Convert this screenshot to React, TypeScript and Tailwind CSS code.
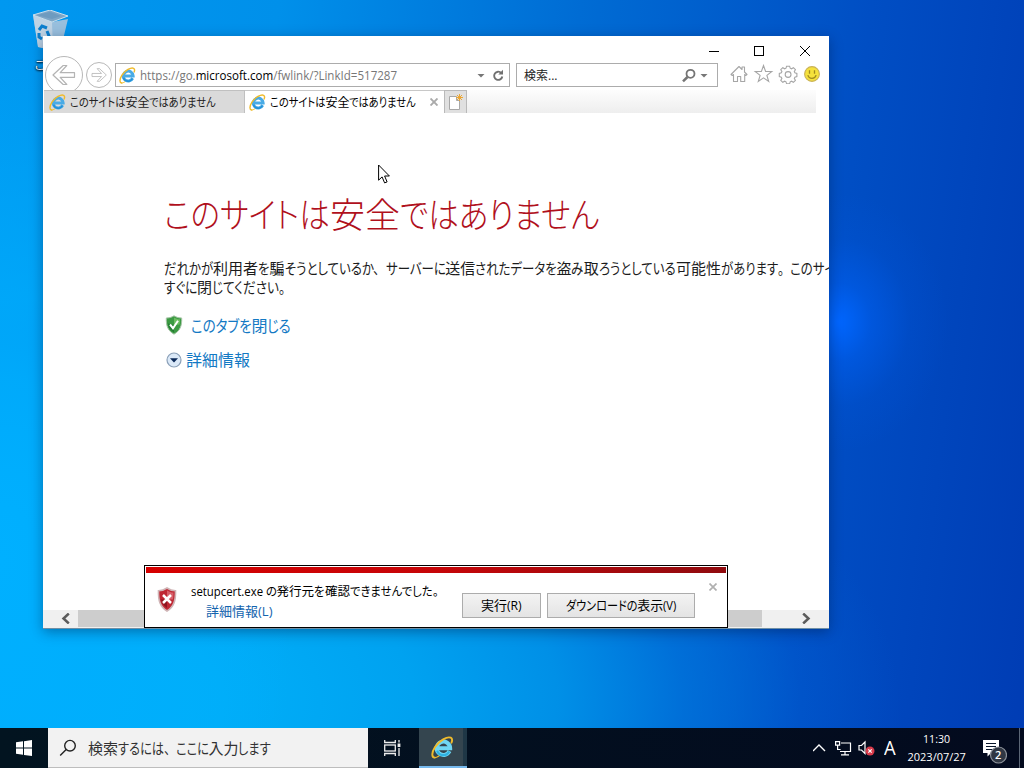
import { useLayoutEffect, useRef, type ReactNode } from "react";

/** Squeezes a whole line to the given width. */
function FitLine({ width, className = "", children }: { width: number; className?: string; children: ReactNode }) {
  const inner = useRef<HTMLSpanElement>(null);
  useLayoutEffect(() => {
    const el = inner.current;
    if (el) el.style.transform = `scaleX(${width / el.offsetWidth})`;
  }, [width]);
  return (
    <span className={`inline-block whitespace-nowrap ${className}`} style={{ width }}>
      <span ref={inner} className="inline-block origin-left">
        {children}
      </span>
    </span>
  );
}

/** UI Japanese: full-width kanji with condensed kana, set to a total width. */
function JpLine({ text, width, className = "" }: { text: string; width: number; className?: string }) {
  const root = useRef<HTMLSpanElement>(null);
  const runs = text.match(/[\u4e00-\u9fff]+|[、。]|[^\u4e00-\u9fff、。]+/g) ?? [];
  useLayoutEffect(() => {
    if (!root.current) return;
    const items = Array.from(root.current.children) as HTMLElement[];
    let kanji = 0;
    let kana = 0;
    const widths = items.map((o) => {
      const w = (o.firstElementChild as HTMLElement).offsetWidth;
      if (o.dataset.kana) kana += w;
      else kanji += w;
      return w;
    });
    if (!kana) return;
    const s = (width - kanji) / kana;
    items.forEach((o, i) => {
      if (!o.dataset.kana) return;
      o.style.width = `${widths[i] * s}px`;
      (o.firstElementChild as HTMLElement).style.transform = `scaleX(${s})`;
    });
  }, [text, width]);
  return (
    <span ref={root} className={`inline-flex whitespace-pre ${className}`}>
      {runs.map((r, i) => {
        const kana = !/[\u4e00-\u9fff]/.test(r);
        const stop = /[、。]/.test(r);
        return (
          <span key={i} data-kana={kana ? "1" : undefined} className="inline-block">
            <span className={kana && !stop ? "inline-block origin-left [font-feature-settings:'palt']" : "inline-block origin-left"}>{r}</span>
          </span>
        );
      })}
    </span>
  );
}

function IeLogo({ size, glow = false }: { size: number; glow?: boolean }) {
  return (
    <svg width={size} height={size} viewBox="0 0 24 24" fill="none" className="shrink-0">
      <path d="M19.300 15.900a7 7 0 1 1 .7-3.200H7" stroke={glow ? "#6fd6f2" : "#49abe6"} strokeWidth="4.200" />
      <path d="M19 16.200a6.800 6.800 0 0 1-12.600-1" stroke={glow ? "#2fb2e2" : "#2390d8"} strokeWidth="2.200" />
      <path
        d="M3.800 22.600C.600 22.200.400 17.500 4.200 11.500 8.600 4.600 17 .200 20.600 1.800c1.600.800 1.700 2.900.800 5.200"
        stroke="#efbb2c"
        strokeWidth="2"
        strokeLinecap="round"
      />
      <path d="M3.800 22.600c1.400.100 2.800-.600 4.400-1.700" stroke="#efbb2c" strokeWidth="1.400" strokeLinecap="round" />
    </svg>
  );
}

function RecycleBin() {
  return (
    <svg width="40" height="46" viewBox="0 0 40 46" className="block">
      <path d="M2 5 7 37l22 5 8-33-16 3z" fill="#a9c3da" opacity=".9" />
      <path d="M2 5 7 37l15 3-1-28z" fill="#c4d6e5" opacity=".85" />
      <path d="M2 5 19 0l18 6-16 6z" fill="#7fa6c6" stroke="#c9dfec" strokeWidth="1" />
      <path d="m6 5 13-3 11 4-9 3z" fill="#6e9bbf" />
      <g stroke="#0c7fce" strokeWidth="3" fill="none">
        <path d="m8 20 3-4 5 2" />
        <path d="m16 21 2 5-3 3" />
        <path d="m11 29-3-2v-4" />
      </g>
    </svg>
  );
}

function Arrow({ size, flip = false }: { size: number; flip?: boolean }) {
  return (
    <svg width={size} height={size} viewBox="0 0 24 24" className={flip ? "-scale-x-100" : ""}>
      <path
        d="M1 12 11.200 2.500h3.600L8.200 9.700h14.300v4.600H8.200l6.600 7.200h-3.600z"
        fill="#fff"
        stroke="#b4b4b4"
        strokeWidth="1.200"
        strokeLinejoin="round"
      />
    </svg>
  );
}

function TitleBar() {
  return (
    <div className="flex h-[27px] shrink-0 items-center justify-end pt-[3px] pr-[18px]">
      <svg width="102" height="12" viewBox="0 0 102 12" fill="none" stroke="#000" shapeRendering="crispEdges">
        <path d="M0 6.500h10" />
        <rect x="45.500" y="1.500" width="9" height="9" />
        <path d="m91 1 10 10M101 1 91 11" shapeRendering="auto" />
      </svg>
    </div>
  );
}

function NavRow() {
  return (
    <div className="flex h-[27px] shrink-0">
      <div className="flex w-[72px] items-center gap-[3px] pl-[2px]">
        <span className="-mt-[3px] flex size-[38px] shrink-0 items-center justify-center rounded-full border border-[#b8b8b8] bg-white">
          <Arrow size={24} />
        </span>
        <span className="-mt-[3px] flex size-[26px] shrink-0 items-center justify-center rounded-full border border-[#b8b8b8] bg-white">
          <Arrow size={16} flip />
        </span>
      </div>
      <div className="flex h-[24px] w-[395px] items-center border border-[#acacac] bg-white pl-[3px]">
        <IeLogo size={17} />
        <FitLine width={257} className="mt-[2px] ml-[4px] text-[12px] leading-none text-[#777]">
          https://go.<span className="text-black">microsoft.com</span>/fwlink/?LinkId=517287
        </FitLine>
        <svg width="34" height="16" viewBox="0 0 34 16" className="mt-[2px] ml-auto" fill="none">
          <path d="M2.500 6h7L6 9.500z" fill="#777" />
          <path d="M26.200 4.900A4.100 4.100 0 1 0 27.300 8.500" stroke="#707070" strokeWidth="1.900" />
          <path d="M28 1.800v4.700h-4.700z" fill="#707070" />
        </svg>
      </div>
      <div className="ml-[6px] flex h-[24px] w-[202px] items-center border border-[#acacac] bg-white pl-[7px]">
        <FitLine width={33} className="mt-[2px] text-[12px] leading-none text-[#222]">検索...</FitLine>
        <svg width="28" height="16" viewBox="0 0 28 16" className="mt-[2px] mr-[8px] ml-auto" fill="none">
          <circle cx="9.500" cy="5.800" r="4" stroke="#757575" strokeWidth="1.800" />
          <path d="M6.500 9 2 13.300" stroke="#757575" strokeWidth="2.500" />
          <path d="M19.500 6h7L23 9.500z" fill="#777" />
        </svg>
      </div>
      <div className="-mt-[2px] flex h-[26px] items-center pl-[12px]">
        <svg width="92" height="20" viewBox="0 0 92 20" fill="none" stroke="#a6a6a6" strokeWidth="1.100">
          <path d="M1 10.500 9 2.500l3 3V3h2.500v5L17 10.500l-1.300 1-1-1V17.500h-4v-5H7.500v5h-4v-7l-1.200 1z" strokeLinejoin="round" />
          <path d="m33.500 1.500 2.100 6h6.200l-4.900 3.900 1.800 6.100-5.200-3.600-5.200 3.600 1.800-6.100-4.900-3.900h6.200z" />
          <path d="m56.600 2.200 3 0 .6 2 1.300.600 1.900-1.100 2 2-1.100 1.900.600 1.300 2 .600v3l-2 .600-.600 1.300 1.100 1.900-2 2-1.900-1.100-1.300.600-.600 2h-3l-.600-2-1.300-.600-1.900 1.100-2-2 1.100-1.900-.600-1.300-2-.600v-3l2-.600.600-1.300-1.100-1.900 2-2 1.900 1.100 1.300-.600z" />
          <circle cx="58.100" cy="10.500" r="2.900" />
          <circle cx="82" cy="10" r="7.400" fill="#f5e13c" stroke="#c9b25a" />
          <path d="M79.500 6.300v3.400M84.500 6.300v3.400M77.900 11.200c1 4.200 7.200 4.200 8.200 0" stroke="#a08a20" strokeWidth="1.300" />
        </svg>
      </div>
    </div>
  );
}

function TabRow() {
  return (
    <div className="relative flex h-[23px] shrink-0">
      <div className="ml-px flex w-[201px] items-center border-t border-r border-[#c0c0c0] bg-[#dadada] pl-[5px]">
        <IeLogo size={17} />
        <JpLine text="このサイトは安全ではありません" width={146} className="mt-[2px] ml-[4px] text-[12px] leading-none text-[#222]" />
      </div>
      <div className="flex w-[199px] items-center border-t border-[#c8c8c8] bg-white pl-[4px]">
        <IeLogo size={17} />
        <JpLine text="このサイトは安全ではありません" width={146} className="mt-[2px] ml-[4px] text-[12px] leading-none text-black" />
        <svg width="8" height="8" viewBox="0 0 8 8" className="mr-[6px] ml-auto">
          <path d="m.500.500 7 7m0-7-7 7" stroke="#aaa" strokeWidth="1.900" />
        </svg>
      </div>
      <div className="flex w-[23px] items-center justify-center border border-b-0 border-[#b9b9b9] bg-[#e0e0e0]">
        <svg width="17" height="18" viewBox="0 0 17 18">
          <path d="M2.500 3.500h7v4h3v9h-10z" fill="#fff" stroke="#a8a8a8" />
          <path d="M12.500 1v7M9 4.500h7M10 2l5 5m0-5-5 5" stroke="#eda733" strokeWidth="1" />
        </svg>
      </div>
      <div className="mr-[13px] flex-1 bg-linear-to-b from-[#fdfdfd] to-[#eeeeee]" />
    </div>
  );
}

function Page() {
  return (
    <div className="flex flex-1 flex-col overflow-hidden pl-[121px]">
      <h1 className="mt-[81px] h-[42px] leading-[42px]">
        <JpLine text="このサイトは安全ではありません" width={435} className="text-[35px] leading-[42px] font-light text-[#b0101c]" />
      </h1>
      <p className="mt-[23px] flex flex-col text-[15px] leading-[19px] text-[#1c1c1c]">
        <JpLine
          text="だれかが利用者を騙そうとしているか、サーバーに送信されたデータを盗み取ろうとしている可能性があります。このサイ"
          width={672}
        />
        <JpLine text="すぐに閉じてください。" width={128} />
      </p>
      <div className="mt-[18px] flex h-[20px] items-center pl-[1px] text-[#1379c4]">
        <svg width="18" height="20" viewBox="0 0 18 20">
          <path d="M9 .800c2.500 1.600 5 2.200 7.700 2.200.2 7.500-1.200 12.500-7.700 16.200C2.500 15.500 1.100 10.500 1.300 3 4 3 6.500 2.400 9 .800z" fill="#3c9a43" stroke="#a9c5a9" strokeWidth="1" />
          <path d="M9 2.500c2 1.200 4 1.700 6 1.800 0 2-.1 3.700-.500 5.200L9 10z" fill="#6cbd62" />
          <path d="M9 10v7.500C5 15 3.300 12.500 3 8.500z" fill="#237c32" />
          <path d="m5 9.500 3 3.700 5-7.400" fill="none" stroke="#fff" strokeWidth="2" />
        </svg>
        <JpLine text="このタブを閉じる" width={100} className="mt-[2px] ml-[8px] text-[16px] leading-[20px]" />
      </div>
      <div className="mt-[15px] flex h-[20px] items-center pl-[2px] text-[#1379c4]">
        <svg width="16" height="16" viewBox="0 0 16 16">
          <circle cx="8" cy="8" r="7" fill="#dbe9f8" stroke="#8ba0b8" strokeWidth="1.200" />
          <path d="M4 6.300h8L8 10.500z" fill="#0b2858" />
        </svg>
        <span className="ml-[4px] text-[16px] leading-[20px]">詳細情報</span>
      </div>
    </div>
  );
}

function ScrollBar() {
  return (
    <div className="flex h-[18px] shrink-0 items-stretch bg-[#f0f0f0] pb-px">
      <div className="flex w-[35px] items-center justify-end pr-[8px]">
        <svg width="9" height="11" viewBox="0 0 9 11"><path d="M7.800.500 2.500 5.500l5.300 5" fill="none" stroke="#5c5c5c" strokeWidth="2.500" /></svg>
      </div>
      <div className="w-[684px] bg-[#cdcdcd]" />
      <div className="flex flex-1 items-center pl-[40px]">
        <svg width="9" height="11" viewBox="0 0 9 11"><path d="m1.200.500 5.300 5-5.300 5" fill="none" stroke="#5c5c5c" strokeWidth="2.500" /></svg>
      </div>
    </div>
  );
}

function DownloadBar() {
  return (
    <div className="absolute top-[529px] left-[101px] flex h-[63px] w-[584px] flex-col border border-black bg-white p-px">
      <div className="h-[6px] shrink-0 bg-linear-to-r from-[#d60000] via-[#c60508] to-[#900a0e]" />
      <div className="flex flex-1 items-start">
        <svg width="20" height="25" viewBox="0 0 20 25" className="mt-[14px] ml-[11px]">
          <path d="M10 1c2.700 1.900 5.400 2.700 8.500 2.700C18.800 13.500 17 19.500 10 24 3 19.500 1.200 13.500 1.500 3.700 4.600 3.700 7.300 2.900 10 1z" fill="#bf2834" stroke="#cfb4b6" strokeWidth="1.600" />
          <path d="M10 3.500c2 1.300 4.200 2 6.500 2.100 0 2.800-.1 4.700-.700 6.900H10z" fill="#d8606a" />
          <path d="M10 12.500V21c-3.800-2.800-5.300-5-6-8.500z" fill="#8d1520" />
          <path d="m6 8 8 8m0-8-8 8" stroke="#fff" strokeWidth="2.500" />
        </svg>
        <div className="mt-[9px] ml-[14px] flex w-[271px] flex-col">
          <JpLine text="setupcert.exe の発行元を確認できませんでした。" width={254} className="text-[12.500px] leading-[20px] text-black" />
          <JpLine text="詳細情報(L)" width={66} className="ml-[15px] text-[13px] leading-[19px] text-[#1464ae]" />
        </div>
        <button className="mt-[20px] flex h-[25px] w-[79px] items-center justify-center border border-[#acacac] bg-linear-to-b from-[#f3f3f3] to-[#e4e4e4] text-[13px] leading-none">
          <JpLine text="実行(R)" width={41} />
        </button>
        <button className="mt-[20px] ml-[6px] flex h-[25px] w-[148px] items-center justify-center border border-[#acacac] bg-linear-to-b from-[#f3f3f3] to-[#e4e4e4] text-[13px] leading-none">
          <JpLine text="ダウンロードの表示(V)" width={110} />
        </button>
        <svg width="8" height="8" viewBox="0 0 8 8" className="mt-[10px] ml-[14px]">
          <path d="m.500.500 7 7m0-7-7 7" stroke="#b0b0b0" strokeWidth="1.700" />
        </svg>
      </div>
    </div>
  );
}

function Taskbar() {
  return (
    <div className="flex h-[40px] shrink-0 bg-linear-to-r from-[#021420] to-[#030a1e] text-white">
      <div className="flex w-[48px] items-center justify-center">
        <svg width="16" height="16" viewBox="0 0 16 16" fill="#fff">
          <path d="M0 2.300 7 1.300v6.300H0zM8 1.200 16 0v7.600H8zM0 8.500h7v6.300l-7-1zM8 8.500h8V16l-8-1.100z" />
        </svg>
      </div>
      <div className="flex w-[320px] items-center border-b border-[#bdbdbd] bg-[#f2f2f2] pl-[11px]">
        <svg width="18" height="18" viewBox="0 0 18 18" fill="none" stroke="#222" strokeWidth="1.400">
          <circle cx="11" cy="6.700" r="5.300" />
          <path d="m7.200 10.600-6 6" />
        </svg>
        <JpLine text="検索するには、ここに入力します" width={183} className="mt-px ml-[11px] text-[15px] leading-none text-[#333]" />
      </div>
      <div className="flex w-[51px] items-center justify-center pr-[3px]">
        <svg width="17" height="16" viewBox="0 0 17 16" fill="none" stroke="#eee" strokeWidth="1.300">
          <path d="M.700 0v2.500h10.600V0M.700 16v-2.500h10.600V16" />
          <rect x=".700" y="5" width="10.600" height="6" />
          <path d="M15 0v2.500M15 8v8" />
          <path d="M15 3.500V7" strokeWidth="2.800" />
        </svg>
      </div>
      <div className="flex w-[48px] border-b-2 border-[#76b9ed]">
        <div className="flex flex-1 items-center justify-center bg-[#34454f] pl-[3px]"><IeLogo size={23} glow /></div>
        <div className="w-[4px] bg-[#1f3746]" />
      </div>
      <div className="ml-auto flex items-center">
        <svg width="66" height="18" viewBox="0 0 66 18" fill="none" stroke="#fff" strokeWidth="1.200">
          <path d="m0 12 6-6 6 6" strokeWidth="1.400" />
          <path d="M28 4h9.500v8.500H27M32 12.500v3M28 15.800h8" />
          <path d="M22.600 2.600h4v3.600h-4zM24.600 6.200v4.300h3" />
          <path d="M46 6.500h2.500L52 3v11.500L48.500 11H46z" />
          <circle cx="57" cy="12" r="4.500" fill="#d83b4b" stroke="none" />
          <path d="m55.300 10.300 3.400 3.400m0-3.400-3.400 3.400" strokeWidth="1.200" />
        </svg>
        <FitLine width={12} className="ml-[5px] text-[20px] leading-none font-medium">A</FitLine>
        <div className="ml-[11px] flex w-[59px] flex-col items-center text-[11px] leading-[18px]">
          <FitLine width={27}>11:30</FitLine>
          <FitLine width={58}>2023/07/27</FitLine>
        </div>
        <div className="relative ml-[17px] h-[40px] w-[36px]">
          <svg width="24" height="27" viewBox="0 0 24 27" className="mt-[11px]">
            <path d="M0 1h16v13H8l-3.500 3.500V14H0z" fill="#fff" />
            <path d="M3 4.500h10M3 7.500h10M3 10.500h7" stroke="#08152a" />
            <circle cx="15.500" cy="16" r="8" fill="#303743" stroke="#8b9098" strokeWidth="1.200" />
          </svg>
          <span className="absolute top-[20px] left-[12px] text-[11px] leading-[14px] font-semibold">2</span>
        </div>
        <div className="mr-[4px] h-[40px] w-px bg-[#5c6676]" />
      </div>
    </div>
  );
}

export default function App() {
  return (
    <div className="relative flex h-[768px] w-[1024px] flex-col overflow-hidden bg-[radial-gradient(ellipse_110px_130px_at_838px_322px,#0066ff_0%,rgba(0,98,248,0.500)_30%,rgba(0,92,235,0.150)_65%,rgba(0,90,230,0)_100%),radial-gradient(ellipse_300px_520px_at_0px_560px,#00b0ff_0%,rgba(0,174,253,0.900)_35%,rgba(0,162,246,0)_100%),radial-gradient(ellipse_900px_400px_at_0px_700px,#00b2fc_0%,#00aef8_25%,#00a2f0_46%,rgba(0,146,232,0.950)_62%,rgba(0,120,222,0.700)_76%,rgba(0,100,215,0.300)_89%,rgba(0,90,210,0)_100%),linear-gradient(97deg,#0098f0_0%,#0090ea_25%,#006cd4_52%,#004ec4_78%,#003cb4_100%)] font-['Open_Sans','Noto_Sans_CJK_JP',sans-serif]">
      <div className="absolute top-[10px] left-[31px]">
        <RecycleBin />
      </div>
      <span className="absolute top-[58px] left-[34px] text-[12px] leading-[16px] text-white [text-shadow:0_1px_2px_#000,0_0_2px_#000]">ごみ箱</span>
      <div className="flex-1" />
      <main className="absolute top-[36px] left-[43px] flex h-[593px] w-[786px] flex-col border-b border-[#6f8fa5] bg-white shadow-[0_3px_12px_rgba(0,20,60,0.400)]">
        <TitleBar />
        <NavRow />
        <TabRow />
        <Page />
        <ScrollBar />
        <DownloadBar />
      </main>
      <svg width="14" height="21" viewBox="0 0 14 21" className="absolute top-[164px] left-[378px]">
        <path d="M.600 1v15.200l3.500-3.300 2.500 6 2.500-1-2.500-5.900h4.800z" fill="#fff" stroke="#000" />
      </svg>
      <Taskbar />
    </div>
  );
}
